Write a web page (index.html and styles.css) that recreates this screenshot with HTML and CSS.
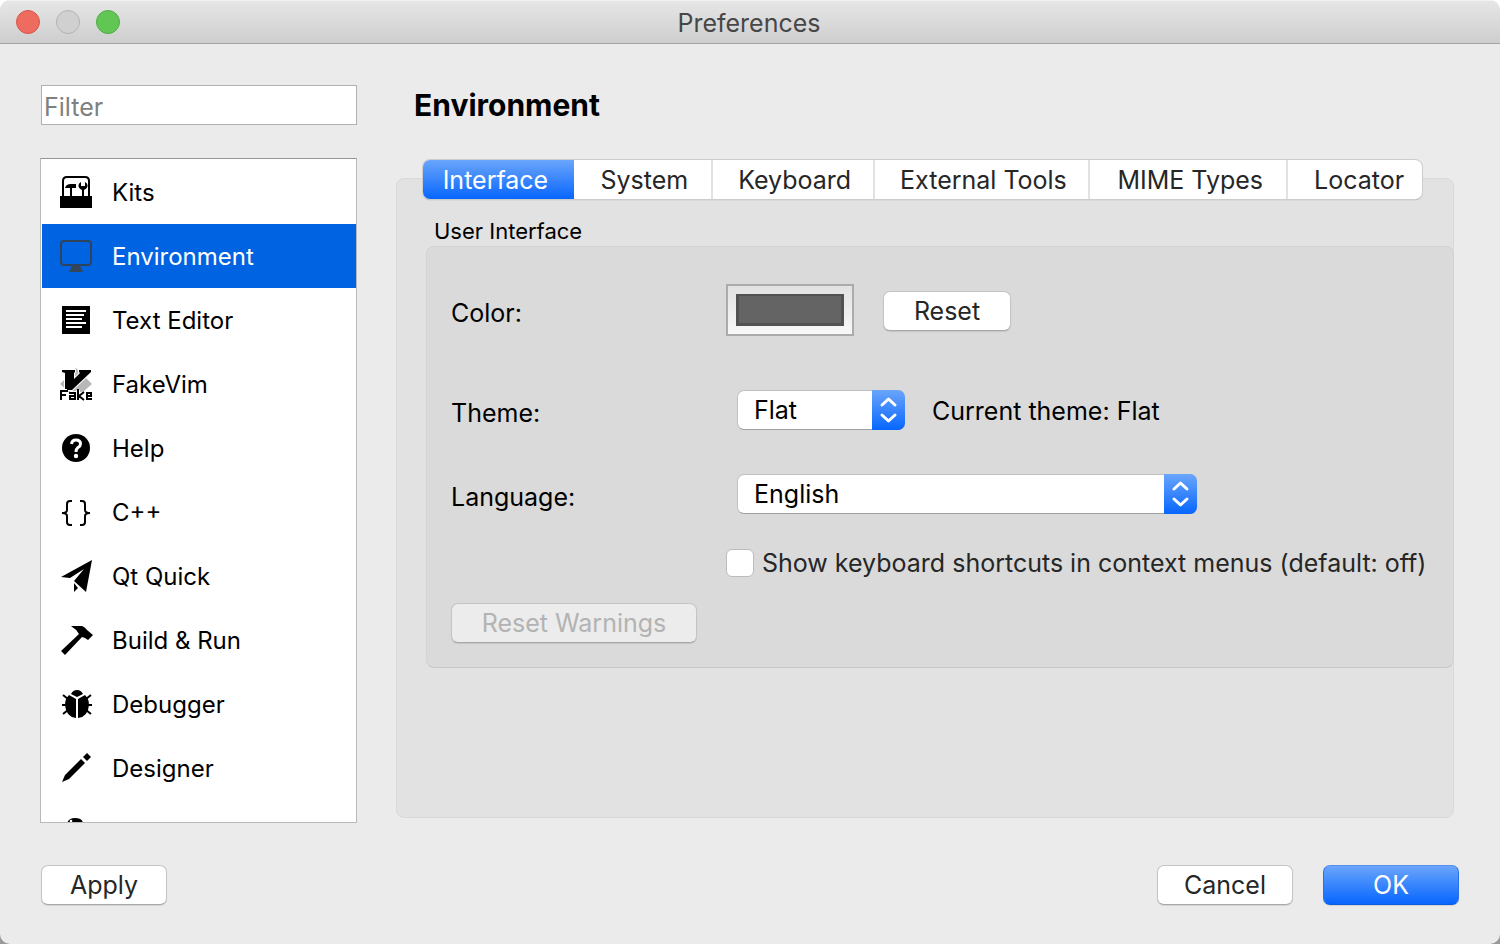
FILE: index.html
```html
<!DOCTYPE html>
<html lang="en">
<head>
<meta charset="utf-8">
<title>Preferences</title>
<link rel="stylesheet" href="styles.css">
</head>
<body>
<div class="window">
  <header class="titlebar">
    <div class="lights">
      <button class="light light-close" aria-label="Close"></button>
      <button class="light light-min" aria-label="Minimize" disabled></button>
      <button class="light light-zoom" aria-label="Zoom"></button>
    </div>
    <h1 class="title">Preferences</h1>
  </header>

  <div class="content">
    <aside class="sidebar">
      <input class="filter" type="text" placeholder="Filter" aria-label="Filter">
      <nav class="categories">
        <button class="category">
          <svg class="icon" viewBox="0 0 32 32"><path d="M3 21V5Q3 1 7 1H25Q29 1 29 5V21" fill="none" stroke="#000" stroke-width="2"/><path d="M0 20H32V32H0zM5 12Q6 8 11 8H16V12H12V20H10V12zM22 20V14Q18 12 18.500 9Q19 7 21 6V10H25V6Q27 7 27.500 9Q28 12 24 14V20z"/></svg>
          <span>Kits</span>
        </button>
        <button class="category category-selected" aria-current="true">
          <svg class="icon" viewBox="0 0 32 32"><rect x="1" y="1" width="30" height="24" rx="3" fill="none" stroke="#30435c" stroke-width="2"/><path d="M12 26H20L23 32H9z" fill="#35465a"/></svg>
          <span>Environment</span>
        </button>
        <button class="category">
          <svg class="icon" viewBox="0 0 32 32"><path d="M2 2H30V30H2z"/><path d="M6 7H26M6 11H24M6 15H22M6 19H26M6 23H22" stroke="#fff" stroke-width="2"/></svg>
          <span>Text Editor</span>
        </button>
        <button class="category">
          <svg class="icon" viewBox="0 0 32 32"><path d="M16 0L32 16L23 24H9L0 16z" fill="#b8b8b8"/><path d="M2 2H15V4L14 5V11L20 5L19 4V2H31V4L12 22H5V5L2 4z" stroke="#fff" stroke-width="2" paint-order="stroke"/><path d="M1 31V23H7M1 27H6M10 25H15V30H10V28H15M18 22V31M24 25L19 28L24 31M31 30H26V25H31V28H26" fill="none" stroke="#fff" stroke-width="4"/><path d="M1 32V23H8M1 27H6M9 25H15V31H10V28H15M18 21V32M24 24L19 28L24 32M32 31H27V25H31V28H27" fill="none" stroke="#000" stroke-width="2"/></svg>
          <span>FakeVim</span>
        </button>
        <button class="category">
          <svg class="icon" viewBox="0 0 32 32"><circle cx="16" cy="16" r="14"/><path d="M11.500 12Q12 8 16 8Q20.500 8 20.500 12Q20.500 14 18 15.500Q16 17 16 20" fill="none" stroke="#fff" stroke-width="3"/><circle cx="16" cy="24" r="2.200" fill="#fff"/></svg>
          <span>Help</span>
        </button>
        <button class="category">
          <svg class="icon" viewBox="0 0 32 32"><path d="M12 5H10Q7 5 7 8V14Q7 17 2 17Q7 17 7 20V26Q7 29 10 29H12M20 5H22Q25 5 25 8V14Q25 17 30 17Q25 17 25 20V26Q25 29 22 29H20" fill="none" stroke="#000" stroke-width="2"/></svg>
          <span>C++</span>
        </button>
        <button class="category">
          <svg class="icon" viewBox="0 0 32 32"><path d="M32 0L1 17L10 18L24 9L14 21L26 32zM14 23L18 28L14 32z"/></svg>
          <span>Qt Quick</span>
        </button>
        <button class="category">
          <svg class="icon" viewBox="0 0 32 32"><path d="M11 2H22Q25 3 27 6L33 11L28 16L25 14L22 13L5 31L1 27L19 10Q16 5 11 2z"/></svg>
          <span>Build &amp; Run</span>
        </button>
        <button class="category">
          <svg class="icon" viewBox="0 0 32 32"><path d="M11 6Q13 2 17 2Q21 2 23 6L17 9zM16 30V11L9 7Q5 11 5 17Q6 29 16 30zM18 30V11L25 7Q29 11 29 17Q28 29 18 30z"/><path d="M3 7L8 11M31 7L26 11M2 17H7M27 17H32M3 26L8 22M31 26L26 22" stroke="#000" stroke-width="2"/></svg>
          <span>Debugger</span>
        </button>
        <button class="category">
          <svg class="icon" viewBox="0 0 32 32"><path d="M21 7L25 11L9 27L2 30L5 23zM23 5L27 1L31 5L27 9z"/></svg>
          <span>Designer</span>
        </button>
        <div class="category">
          <svg class="icon" viewBox="0 0 32 32"><path d="M7 8Q8 2 15 2Q23 2 23 8V16H7z"/><circle cx="11" cy="5" r="1.300" fill="#fff"/></svg>
        </div>
      </nav>
    </aside>

    <main class="page">
      <h2 class="heading">Environment</h2>
      <section class="pane">
        <div class="tabs" role="tablist">
          <button class="tab tab-active" role="tab" aria-selected="true">Interface</button>
          <button class="tab" role="tab">System</button>
          <button class="tab" role="tab">Keyboard</button>
          <button class="tab" role="tab">External Tools</button>
          <button class="tab" role="tab">MIME Types</button>
          <button class="tab" role="tab">Locator</button>
        </div>
        <h3 class="group-title">User Interface</h3>
        <div class="group">
          <div class="row">
            <label class="label" for="color">Color:</label>
            <input class="swatch" id="color" type="color" value="#646464">
            <button class="button button-reset">Reset</button>
          </div>
          <div class="row row-theme">
            <label class="label" for="theme">Theme:</label>
            <span class="popup popup-small">
              <select id="theme"><option>Flat</option></select>
              <svg class="arrows" viewBox="0 0 33 40"><path d="M10 15L16.500 9L23 15M10 25L16.500 31L23 25"/></svg>
            </span>
            <span class="current">Current theme: Flat</span>
          </div>
          <div class="row row-language">
            <label class="label" for="language">Language:</label>
            <span class="popup popup-large">
              <select id="language"><option>English</option></select>
              <svg class="arrows" viewBox="0 0 33 40"><path d="M10 15L16.500 9L23 15M10 25L16.500 31L23 25"/></svg>
            </span>
          </div>
          <label class="check">
            <input type="checkbox">
            <span>Show keyboard shortcuts in context menus (default: off)</span>
          </label>
          <button class="button button-warnings" disabled>Reset Warnings</button>
        </div>
      </section>
    </main>
  </div>

  <footer class="footer">
    <button class="button button-apply">Apply</button>
    <button class="button button-dialog">Cancel</button>
    <button class="button button-dialog button-default">OK</button>
  </footer>
</div>
</body>
</html>
```
FILE: styles.css
```css
* {
  box-sizing: border-box;
}

html {
  background: linear-gradient(#fff, #999);
}

body {
  margin: 0;
  font-family: Inter, "Liberation Sans", sans-serif;
  font-size: 25px;
  line-height: 32px;
  color: #000;
}

button,
input,
select {
  margin: 0;
  font: inherit;
  color: inherit;
}

.window {
  display: flex;
  flex-direction: column;
  min-height: 100vh;
  overflow: hidden;
  background: #ebebeb;
  border-radius: 10px;
}

.titlebar {
  display: grid;
  grid-template-columns: 1fr auto 1fr;
  align-items: center;
  height: 44px;
  padding: 0 18px 0 16px;
  background: linear-gradient(#e6e6e6, #cecece);
  border-top: 1px solid #f2f2f2;
  border-bottom: 1px solid #a3a3a3;
}

.lights {
  display: flex;
  gap: 16px;
}

.light {
  width: 24px;
  height: 24px;
  padding: 0;
  border: 1px solid;
  border-radius: 50%;
}

.light-close {
  background: #ed6b5f;
  border-color: #d6574c;
}

.light-min {
  background: #d0d0d0;
  border-color: #b3b3b3;
}

.light-zoom {
  background: #62c655;
  border-color: #50ab43;
}

.title {
  margin: 0;
  padding-top: 2px;
  font-size: 25px;
  font-weight: 400;
  color: #474747;
}

.content {
  display: flex;
  flex: 1;
  gap: 39px;
  padding: 41px 46px 0 40px;
}

.sidebar {
  display: flex;
  flex-direction: column;
  gap: 33px;
  width: 317px;
}

.filter {
  height: 40px;
  margin-left: 1px;
  padding: 3px 2px 0;
  background: #fff;
  border: 1px solid #b0b0b0;
  border-radius: 0;
}

.filter::placeholder {
  color: #808080;
}

.categories {
  flex: 1 1 0;
  min-height: 0;
  padding: 1px 0 0 1px;
  overflow: hidden;
  background: #fff;
  border: 1px solid #b9b9b9;
  border-top-color: #949494;
}

.category {
  display: flex;
  align-items: center;
  gap: 20px;
  width: 100%;
  height: 64px;
  padding: 0 18px;
  font-size: 24px;
  text-align: left;
  background: none;
  border: 0;
}

.category span {
  padding-top: 2px;
}

.category-selected {
  color: #fff;
  background: #0063e1;
}

.icon {
  flex: none;
  width: 32px;
  height: 32px;
  overflow: visible;
}

.page {
  display: flex;
  flex: 1;
  flex-direction: column;
  min-width: 0;
  padding-bottom: 5px;
}

.heading {
  margin: 4px 18px 57px;
  font-size: 30px;
  font-weight: 700;
}

.pane {
  flex: 1;
  background: #e2e2e2;
  border: 1px solid #d9d9d9;
  border-radius: 8px;
}

.tabs {
  display: grid;
  grid-template-columns: 151fr 139fr 162fr 216fr 198fr 134fr;
  height: 39px;
  margin: -19px 31px 0 26px;
  background: #fff;
  border-radius: 7px;
  box-shadow: 0 0 0 1px #cdcdcd, 0 1px 1px #888;
}

.tab {
  padding: 1px 0 0 4px;
  color: #262626;
  white-space: nowrap;
  background: none;
  border: 0;
  border-right: 2px solid #e2e2e2;
}

.tab:last-child {
  padding-left: 8px;
  border-right: 0;
}

.tab-active {
  padding: 1px 6px 0 0;
  color: #fff;
  background: linear-gradient(#6aa5fb, #0766fe);
  border: 0;
  border-radius: 7px 0 0 7px;
}

.group-title {
  margin: 16px 37px 0;
  font-size: 22px;
  font-weight: 400;
}

.group {
  display: flex;
  flex-direction: column;
  align-items: flex-start;
  margin: -1px -1px 0 29px;
  padding: 37px 0 24px 24px;
  background: #dadada;
  border: 1px solid #d3d3d3;
  border-bottom-color: #c6c6c6;
  border-radius: 8px;
}

.row {
  display: flex;
  align-items: center;
}

.label {
  width: 275px;
  padding-top: 6px;
}

.row-theme {
  margin-top: 54px;
}

.row-language {
  margin-top: 44px;
}

.swatch {
  width: 128px;
  height: 52px;
  padding: 8px;
  background: linear-gradient(#e2e2e2, #f8f8f8);
  border: 2px solid #ababab;
  border-radius: 0;
}

.swatch::-webkit-color-swatch-wrapper {
  padding: 0;
}

.swatch::-webkit-color-swatch {
  border: 3px solid #525252;
  border-top-width: 2px;
  border-radius: 0;
}

.button {
  height: 40px;
  padding: 0;
  color: #262626;
  background: #fff;
  border: 1px solid #c4c4c4;
  border-bottom-color: #a8a8a8;
  border-radius: 7px;
  box-shadow: 0 1px 1px rgba(0, 0, 0, 0.1);
}

.button:disabled {
  color: #b3b3b3;
  background: #ececec;
}

.button-reset {
  width: 128px;
  margin: 2px 0 0 29px;
}

.popup {
  position: relative;
  height: 40px;
  margin-left: 11px;
}

.popup-small {
  width: 168px;
}

.popup-large {
  width: 460px;
}

.popup select {
  width: 100%;
  height: 40px;
  padding: 0 36px 0 16px;
  appearance: none;
  background: #fff;
  border: 1px solid #c0c0c0;
  border-bottom-color: #a0a0a0;
  border-radius: 7px;
}

.arrows {
  position: absolute;
  top: 0;
  right: 0;
  width: 33px;
  height: 40px;
  fill: none;
  stroke: #fff;
  stroke-width: 3;
  stroke-linecap: round;
  stroke-linejoin: round;
  pointer-events: none;
  background: linear-gradient(#6aa5fb, #0766fe);
  border-radius: 0 7px 7px 0;
}

.current {
  margin-left: 27px;
  padding-top: 2px;
}

.check {
  display: flex;
  align-items: center;
  gap: 8px;
  margin: 32px 0 0 275px;
  color: #262626;
  white-space: nowrap;
}

.check span {
  padding-top: 1px;
}

.check input {
  width: 28px;
  height: 28px;
  appearance: none;
  background: #fff;
  border: 1px solid #bcbcbc;
  border-radius: 6px;
}

.button-warnings {
  width: 246px;
  margin-top: 24px;
}

.footer {
  display: flex;
  gap: 30px;
  padding: 42px 41px 39px;
}

.button-apply {
  width: 126px;
  margin-right: auto;
}

.button-dialog {
  width: 136px;
}

.button-default {
  color: #fff;
  background: linear-gradient(#6aa5fb, #0766fe);
  border-color: #5590ee #2a72e8 #0a5ce0;
}
```
